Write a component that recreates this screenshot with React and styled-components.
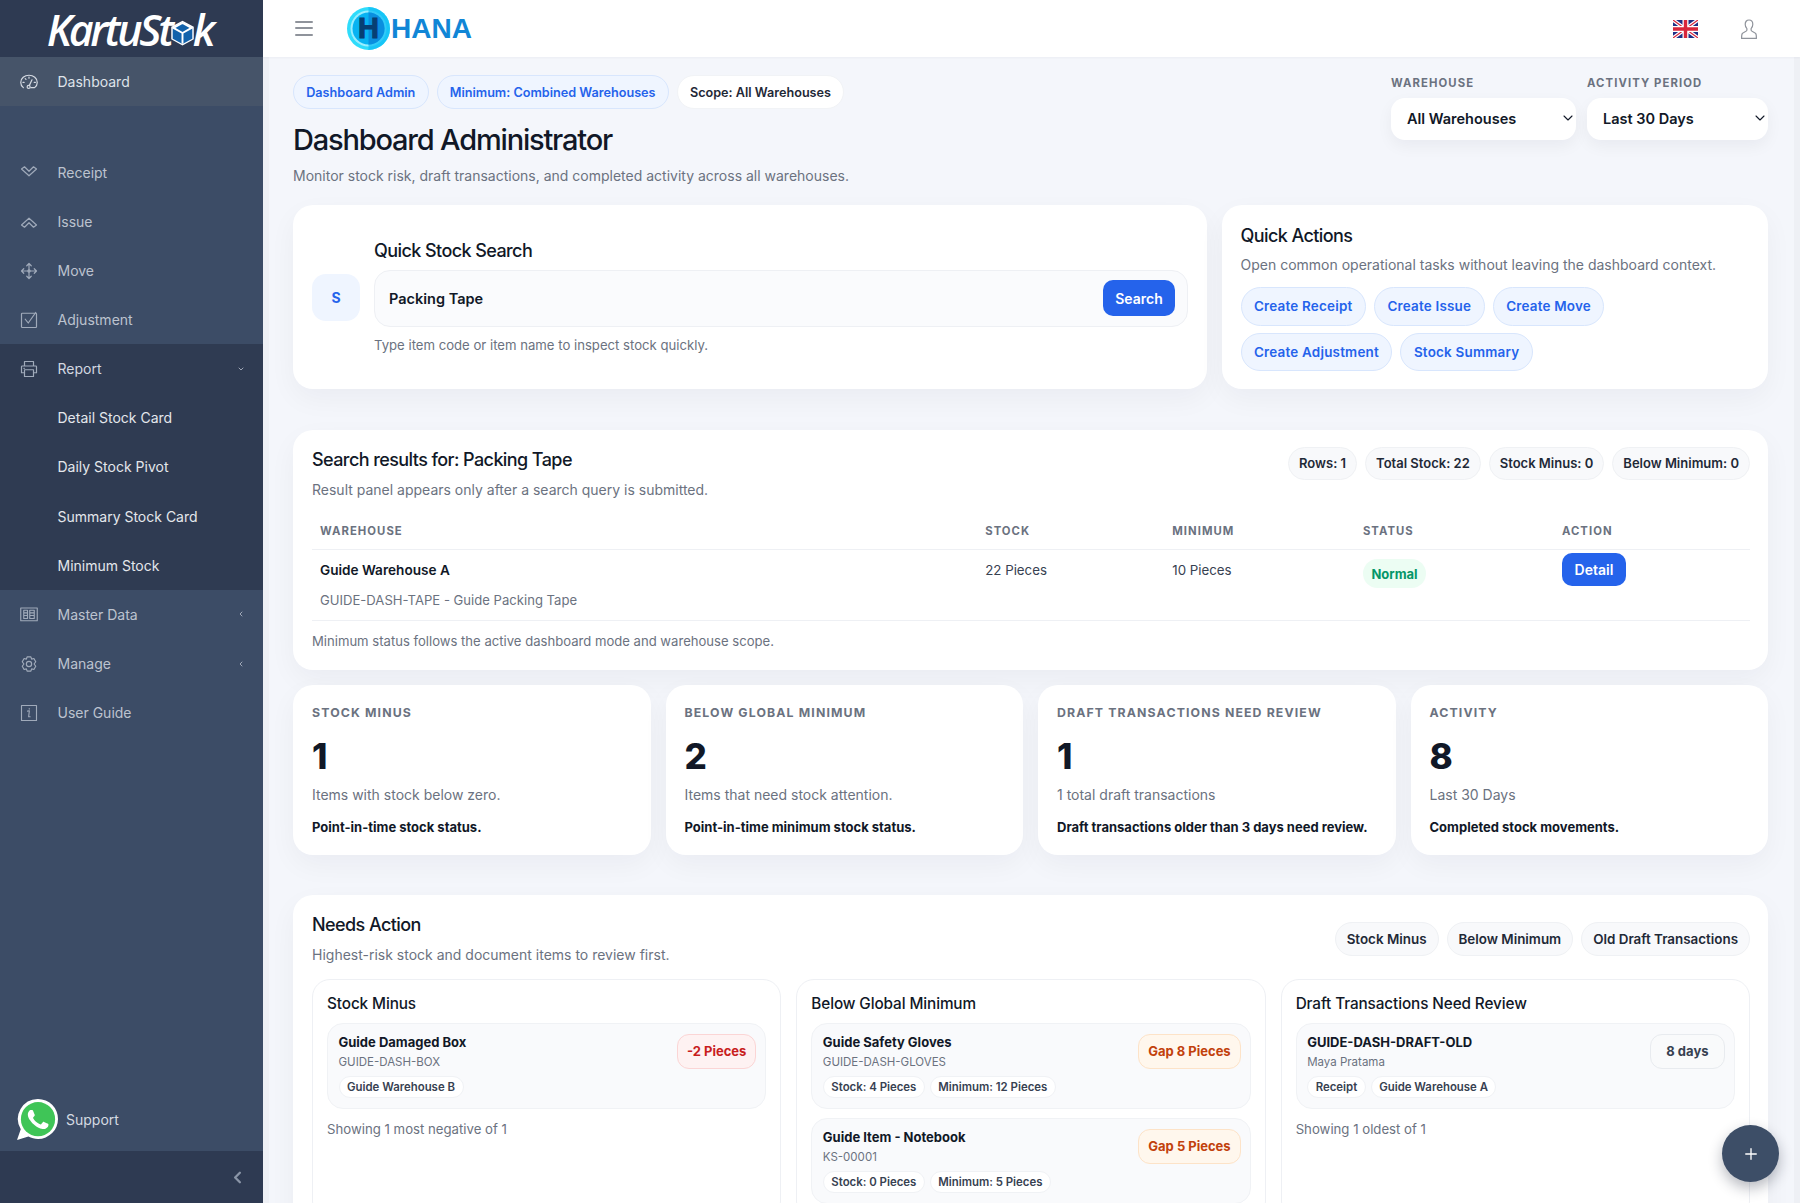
import React from "react";
import styled, { createGlobalStyle } from "styled-components";
import { ChevronDown, ChevronLeft, Plus } from "lucide-react";

const Global = createGlobalStyle`
  html, body { margin: 0; padding: 0; height: 100%; overflow: hidden; }
  body { font-family: Inter, "Noto Sans", sans-serif; background: #f4f6fb; color: #111827; -webkit-font-smoothing: antialiased; }
  * { box-sizing: border-box; }
`;

const Shell = styled.div`
  display: grid; grid-template-columns: 263px 1fr; height: 1203px; overflow: hidden;
`;
const Sidebar = styled.aside`
  background: #3c4c66; display: flex; flex-direction: column; height: 100%; color: #bcc3cf;
`;
const LogoBar = styled.div`
  height: 57px; background: #2e3a52; display: flex; align-items: center; justify-content: center; flex: none;
`;
const LogoText = styled.span`
  font-family: "Open Sans", sans-serif; font-style: italic; font-weight: 600; font-size: 43px; letter-spacing: -3.3px; color: #fff;
  display: inline-flex; align-items: center; line-height: 1; transform: translate(-2px, 1px);
  svg { margin: 7px -3px 0 -2px; }
`;
const NavRow = styled.div`
  height: 49.2px; display: flex; align-items: center; padding: 0 19px 0 20px; font-size: 14px; flex: none;
  background: ${p => (p.$active ? "#465469" : "transparent")};
  color: ${p => (p.$sub ? "#e4e7ec" : p.$active ? "#dfe3e9" : p.$open ? "#d3d8e0" : "#bcc3cf")};
  padding-left: ${p => (p.$sub ? "57.5px" : "20px")};
`;
const NavIcon = styled.span`
  width: 18px; height: 18px; margin-right: 19.5px; display: inline-flex; color: ${p => (p.$active ? "#d5dae2" : "#a0aaba")}; flex: none;
  svg { width: 18px; height: 18px; }
`;
const NavLabel = styled.span`flex: 1;`;
const NavSpacer = styled.div`height: 41.6px; flex: none;`;
const NavGroup = styled.div`background: #2f3b52; flex: none; margin-top: -0.6px;`;
const Caret = styled.span`
  display: inline-flex; color: #b4bcc9; width: 8px; justify-content: center; margin-right: -1px;
`;
const SidebarFill = styled.div`flex: 1;`;
const Support = styled.div`
  display: flex; align-items: center; gap: 8px; padding: 0 0 11.5px 17px; font-size: 14px; color: #d5dae2;
`;
const SidebarFoot = styled.div`
  height: 52px; background: #2e3a52; display: flex; align-items: center; justify-content: flex-end; padding: 0 16px 0 0; color: #8a95a7; flex: none;
`;

const Main = styled.main`
  position: relative; display: flex; flex-direction: column; height: 100%; overflow: hidden; min-width: 0;
  background: linear-gradient(90deg, #eef0f5 0, #eef0f5 6px, #f4f6fb 6px, #f4f6fb calc(100% - 6px), #eef0f5 calc(100% - 6px));
`;
const Topbar = styled.header`
  height: 57px; background: #fff; display: flex; align-items: center; flex: none; padding: 0 43px 0 32px; box-shadow: 0 1px 2px rgba(15,23,42,.04);
`;
const Burger = styled.div`
  width: 18px; height: 15px; display: flex; flex-direction: column; justify-content: space-between; margin-right: 34px; margin-top: -1px;
  i { display: block; height: 2px; background: #8f939b; border-radius: 1px; }
`;
const Brand = styled.div`
  display: flex; align-items: center; gap: 1px; color: #1186d6; font-family: "Liberation Sans", sans-serif; font-weight: 700; font-size: 28px; line-height: 1;
`;
const TopFill = styled.div`flex: 1;`;
const TopIcons = styled.div`display: flex; align-items: center; gap: 43px;`;

const Content = styled.div`
  padding: 18px 32px 0 30px; display: flex; flex-direction: column; min-height: 0;
`;
const PageHead = styled.div`display: flex; justify-content: space-between; align-items: flex-start;`;
const PageIntro = styled.div`display: flex; flex-direction: column;`;
const ChipRow = styled.div`display: flex; gap: 8px; flex-wrap: wrap; margin-top: ${p => p.$mt ?? 0}px;`;
const ActionRow = styled.div`display: flex; gap: 7px 8px; flex-wrap: wrap; margin-top: 12px;`;
const Chip = styled.span`
  display: inline-flex; align-items: center; height: ${p => p.$h ?? 34}px; padding: 0 ${p => p.$px ?? 12.2}px; border-radius: 999px; font-size: ${p => p.$fs ?? 12.65}px; font-weight: 600; white-space: nowrap;
  background: ${p => (p.$tone === "blue" ? "#eff5ff" : p.$tone === "white" ? "#fff" : "#f8f9fb")};
  color: ${p => (p.$tone === "blue" ? "#2563eb" : "#1f2937")};
  border: 1px solid ${p => (p.$tone === "blue" ? "#d8e6fd" : p.$tone === "white" ? "#f1f3f6" : "#eff1f4")};
`;
const PageTitle = styled.h1`
  margin: 13px 0 0; font-size: 29px; line-height: 36px; font-weight: 500; letter-spacing: -1.19px; color: #111827;
`;
const PageSub = styled.p`margin: 7px 0 0; font-size: 14px; line-height: 22px; color: #6b7280;`;
const Filters = styled.div`display: flex; gap: 11px; padding-top: 1px;`;
const Filter = styled.div`display: flex; flex-direction: column; width: ${p => p.$w}px;`;
const FilterLabel = styled.span`
  font-size: 11.3px; line-height: 14px; font-weight: 700; letter-spacing: 1.1px; color: #6b7280; text-transform: uppercase;
`;
const Select = styled.div`
  margin-top: 8px; height: 42px; background: #fff; border-radius: 14px; display: flex; align-items: center; justify-content: space-between; padding: 0 0 1.5px 16px; font-size: 14.5px; font-weight: 600; color: #111827;
  box-shadow: 0 6px 16px rgba(15,23,42,.05);
`;

const TopGrid = styled.div`
  display: grid; grid-template-columns: 914fr 546fr; gap: 15px; margin-top: 18px;
`;
const Card = styled.section`
  background: #fff; border-radius: 20px; box-shadow: 0 10px 28px rgba(15,23,42,.045); padding: ${p => p.$pad ?? "19px"};
  margin-top: ${p => p.$mt ?? 0}px;
`;
const SearchCard = styled(Card)`display: flex; align-items: center; gap: 14px;`;
const SearchBadge = styled.div`
  width: 48px; height: 47px; border-radius: 14px; background: #eff5ff; color: #2563eb; font-weight: 700; font-size: 14px; display: flex; align-items: center; justify-content: center; flex: none;
`;
const SearchBody = styled.div`flex: 1; min-width: 0;`;
const CardTitle = styled.h2`
  margin: 0; font-size: 18px; line-height: 22px; font-weight: 500; letter-spacing: -0.58px; color: #111827;
`;
const CardSub = styled.p`margin: ${p => p.$mt ?? 9}px 0 0; font-size: ${p => p.$fs ?? 14}px; line-height: 20px; color: #6b7280;`;
const SearchInputWrap = styled.div`
  margin-top: 8px; height: 57px; border: 1px solid #eef0f4; background: #fafbfd; border-radius: 16px; display: flex; align-items: center; padding: 0 12px 0 14px;
`;
const SearchInput = styled.input`
  flex: 1; border: 0; background: transparent; outline: 0; font: 600 14.5px Inter, sans-serif; color: #111827; padding: 0; min-width: 0;
`;
const PrimaryButton = styled.button`
  border: 0; background: #2563eb; color: #fff; font: 600 14px Inter, sans-serif; height: ${p => p.$h ?? 36}px; width: ${p => p.$w ?? 72}px; border-radius: 10px; display: inline-flex; align-items: center; justify-content: center; padding: 0;
`;
const ActionChip = styled.span`
  display: inline-flex; align-items: center; height: 38.5px; padding: 0 12.5px; border-radius: 999px; font-size: 13.45px; letter-spacing: 0.2px; font-weight: 600; background: #eff5ff; color: #2563eb; border: 1px solid #d8e6fd;
`;
const HeadRow = styled.div`display: flex; justify-content: space-between; align-items: flex-start;`;
const Table = styled.table`
  width: 100%; border-collapse: collapse; table-layout: fixed; margin-top: 13px;
`;
const Th = styled.th`
  width: ${p => p.$w}px; height: 37px; text-align: left; padding: 0 8px; font-size: 11.3px; font-weight: 700; letter-spacing: 1.05px; text-transform: uppercase; color: #6b7280; border-bottom: 1px solid #eef0f4; vertical-align: middle;
`;
const Td = styled.td`
  padding: ${p => p.$pt ?? 9.5}px 8px 0; vertical-align: top; height: 71px; font-size: 13.3px; line-height: 20px; color: #374151; border-bottom: 1px solid #eef0f4;
`;
const RowName = styled.div`font-weight: 600; font-size: 13.6px; color: #111827;`;
const RowCode = styled.div`margin-top: 10.5px; font-size: 13.1px; color: #6b7280;`;
const StatusChip = styled.span`
  display: inline-flex; align-items: center; height: 29px; padding: 0 8.5px; border-radius: 999px; background: #ecfdf3; color: #059669; font-size: 13px; font-weight: 700;
`;
const StatGrid = styled.div`display: grid; grid-template-columns: repeat(4, 1fr); gap: 15px; margin-top: 15px;`;
const StatCard = styled(Card)`height: 170px; padding: 20px 19px 0;`;
const StatLabel = styled.div`
  font-size: 12.3px; line-height: 16px; font-weight: 700; letter-spacing: 1.13px; color: #6b7280; text-transform: uppercase; white-space: nowrap;
`;
const StatValue = styled.div`
  margin-top: 13.5px; font-size: 35px; line-height: 44px; font-weight: 800; color: #111827;
`;
const StatSub = styled.div`margin-top: 7px; font-size: 14px; line-height: 20px; color: #6b7280;`;
const StatNote = styled.div`margin-top: 13px; font-size: 13px; line-height: 18px; font-weight: 700; color: #111827; white-space: nowrap;`;
const NeedsGrid = styled.div`display: grid; grid-template-columns: repeat(3, 1fr); gap: 15px; margin-top: 14.5px;`;
const Panel = styled.div`
  border: 1px solid #eef0f4; border-radius: 18px; padding: 14px; background: #fff;
`;
const PanelTitle = styled.h3`margin: 0; font-size: 15.3px; line-height: 20px; font-weight: 500; letter-spacing: -0.1px; color: #111827;`;
const Item = styled.div`
  margin-top: ${p => p.$mt ?? 9}px; min-height: 86px; background: #f9fafc; border: 1px solid #f0f2f5; border-radius: 16px; padding: 8.5px 9px 10px 10.5px; display: flex; justify-content: space-between; align-items: flex-start;
`;
const ItemBody = styled.div`min-width: 0;`;
const ItemName = styled.div`font-size: 13px; line-height: 18px; font-weight: 700; color: #111827;`;
const ItemCode = styled.div`margin-top: 3.5px; font-size: 11.5px; line-height: 16px; color: #6b7280;`;
const ItemChips = styled.div`display: flex; gap: 5px; margin-top: 6px;`;
const MiniChip = styled.span`
  display: inline-flex; align-items: center; height: 22px; padding: 0 7.5px; border-radius: 999px; background: #fff; border: 1px solid #f0f2f5; font-size: 11.4px; font-weight: 600; color: #374151; white-space: nowrap;
`;
const Badge = styled.span`
  display: inline-flex; align-items: center; height: 35px; margin-top: 1px; padding: 0 9px; border-radius: 12px; font-size: 13px; font-weight: 700; white-space: nowrap; flex: none;
  background: ${p => ({ red: "#fef2f2", orange: "#fff7ed", gray: "#f9fafb" }[p.$tone])};
  color: ${p => ({ red: "#c81e1e", orange: "#c2410c", gray: "#374151" }[p.$tone])};
  border: 1px solid ${p => ({ red: "#fbd5d5", orange: "#fde3c8", gray: "#e8ebef" }[p.$tone])};
  ${p => p.$tone === "gray" && "padding: 0 15.5px;"}
`;
const PanelFoot = styled.div`margin-top: 9.5px; font-size: 13.2px; line-height: 20px; color: #6b7280;`;
const Fab = styled.button`
  position: absolute; right: 21px; bottom: 21px; width: 57px; height: 57px; border-radius: 50%; border: 0; background: #3d4e67; color: #fff; display: flex; align-items: center; justify-content: center; box-shadow: 0 6px 14px rgba(15,23,42,.3);
`;

const S = { fill: "none", stroke: "currentColor", strokeWidth: 1.6, strokeLinecap: "round", strokeLinejoin: "round", viewBox: "0 0 24 24" };
const IconDash = () => (<svg {...S}><path d="M4.5 19.5C2 17.5 1 15 1 12.5 1 7 6 3 12 3s11 4 11 9.5c0 2.6-1 5-3.500 7h-5" /><circle cx="11.500" cy="18.500" r="2" /><path d="M12.500 16.500 16 9M4 12.500h1.500M7 7.500l1 1M12 5.500v1.500M19 12.500h1.500" /></svg>);
const IconIn = () => (<svg {...S}><path d="M2 8l10 9 10-9-4-3-6 6-6-6z" /></svg>);
const IconOut = () => (<svg {...S}><path d="M2 16l10-9 10 9-4 3-6-6-6 6z" /></svg>);
const IconMove = () => (<svg {...S}><path d="M12 2v20M2 12h20M9 5l3-3 3 3M9 19l3 3 3-3M5 9l-3 3 3 3M19 9l3 3-3 3" /><circle cx="12" cy="12" r="1.500" /></svg>);
const IconCheck = () => (<svg {...S}><rect x="2" y="3" width="20" height="19" rx="1" /><path d="M7 11l4 5 10-14" /></svg>);
const IconPrint = () => (<svg {...S}><path d="M6 8V2h12v6M6 17H2V9a1 1 0 0 1 1-1h18a1 1 0 0 1 1 1v8h-4" /><path d="M6 13h12v9H6zM5 11h1" /></svg>);
const IconTable = () => (<svg {...S} strokeWidth={1.5}><rect x="1" y="4" width="22" height="17" /><path d="M5 7h5v11H5zM13 7h6v11h-6zM13 10.500h6M13 14h6M5 10.500h5M5 14h5" /></svg>);
const IconGear = () => (<svg {...S}><circle cx="12" cy="12" r="3.500" /><path d="M9.500 2.500h5l1 3 3-.8 2.500 4.300-2.200 3 2.200 3-2.500 4.300-3-.8-1 3h-5l-1-3-3 .8L3 15l2.200-3L3 9l2.500-4.300 3 .8z" /></svg>);
const IconInfo = () => (<svg {...S} strokeWidth={1.5}><rect x="2" y="2" width="20" height="20" /><path d="M10 9.500 12.500 9l-1 8h2M12.300 6v.8" /></svg>);

const ChevD = () => <Caret><ChevronDown size={14} strokeWidth={2.5} /></Caret>;
const ChevL = () => <Caret><ChevronLeft size={14} strokeWidth={2.5} /></Caret>;

const Cube = () => (
  <svg width="27" height="28" viewBox="0 0 24 24">
    <path d="M12 1l10 5.500v11L12 23 2 17.500v-11z" fill="#fff" />
    <path d="M12 2.500l8.700 4.800v9.700L12 21.800 3.300 17V7.300z" fill="#1262ab" />
    <path d="M12 3l8 4.500-8 4.500-8-4.500zM12 12v9.500" fill="none" stroke="#fff" strokeWidth="1.700" />
  </svg>
);
const HanaMark = () => (
  <svg width="43" height="43" viewBox="0 0 43 43">
    <circle cx="21.500" cy="21.500" r="21.500" fill="#2fdcfb" />
    <circle cx="21.500" cy="21.500" r="18" fill="#9aeeff" />
    <path d="M21.500 0a21.500 21.500 0 0 1 0 43z" fill="#10bdf5" opacity=".75" />
    <circle cx="21.500" cy="21.500" r="16" fill="#08b3f2" />
    <path d="M21.500 5.500a16 16 0 0 1 0 32z" fill="#0a8fdf" />
    <text x="21.500" y="31" textAnchor="middle" fontFamily="Liberation Sans" fontWeight="700" fontSize="29" stroke="#073f73" strokeWidth="1" fill="#073f73">H</text>
  </svg>
);
const Flag = () => (
  <svg width="25" height="18" viewBox="0 0 25 18">
    <rect width="25" height="18" fill="#1f2f86" />
    <path d="M0 0l25 18M25 0L0 18" stroke="#fff" strokeWidth="3.600" />
    <path d="M0 0l25 18M25 0L0 18" stroke="#d8263c" strokeWidth="1.200" />
    <path d="M12.500 0v18M0 9h25" stroke="#fff" strokeWidth="6" />
    <path d="M12.500 0v18M0 9h25" stroke="#d8263c" strokeWidth="3.400" />
  </svg>
);
const UserIcon = () => (
  <svg width="16" height="20" viewBox="0 0 16 20" fill="none" stroke="#8f939b" strokeWidth="1.200" strokeLinejoin="round">
    <path d="M8 1c2.400 0 3.800 1.900 3.800 4.300 0 1.900-.8 3.500-1.700 4.400v1.500c0 1 3.200 2 4.600 3.300.6.600.7 2 .7 4.900H.6c0-2.900.1-4.300.7-4.900 1.400-1.300 4.600-2.300 4.600-3.300V9.700C5 8.800 4.200 7.200 4.200 5.300 4.200 2.900 5.600 1 8 1z" />
  </svg>
);
const WhatsApp = () => (
  <svg width="41" height="41" viewBox="0 0 24 24">
    <path d="M12.300 0a11.700 11.700 0 0 1 0 23.400c-2 0-3.900-.5-5.600-1.400L0 24l2.200-6.300A11.700 11.700 0 0 1 12.300 0z" fill="#fff" />
    <circle cx="12.300" cy="11.800" r="10" fill="#3fc557" />
    <path d="M17.800 14.400c-.3-.15-1.760-.87-2.030-.97-.27-.1-.47-.15-.67.15-.2.3-.77.97-.94 1.160-.17.2-.35.22-.64.08-.3-.15-1.260-.47-2.400-1.480-.88-.79-1.480-1.760-1.650-2.060-.17-.3-.02-.46.13-.6.13-.14.3-.35.45-.52.15-.18.2-.3.3-.5.1-.2.05-.37-.03-.52-.07-.15-.67-1.610-.92-2.210-.24-.58-.49-.5-.67-.51h-.57c-.2 0-.52.07-.79.37-.27.3-1.040 1.020-1.040 2.480s1.070 2.880 1.210 3.070c.15.2 2.100 3.200 5.080 4.490.71.31 1.260.49 1.700.63.710.22 1.360.19 1.870.12.570-.09 1.760-.72 2-1.410.25-.7.25-1.290.18-1.420-.08-.12-.28-.2-.58-.35z" fill="#fff" />
  </svg>
);

const navTop = [["Receipt", IconIn], ["Issue", IconOut], ["Move", IconMove], ["Adjustment", IconCheck]];
const subs = ["Detail Stock Card", "Daily Stock Pivot", "Summary Stock Card", "Minimum Stock"];
const stats = [
  ["Stock Minus", "1", "Items with stock below zero.", "Point-in-time stock status."],
  ["Below Global Minimum", "2", "Items that need stock attention.", "Point-in-time minimum stock status."],
  ["Draft Transactions Need Review", "1", "1 total draft transactions", "Draft transactions older than 3 days need review."],
  ["Activity", "8", "Last 30 Days", "Completed stock movements."],
];

const NavItem = ({ icon: I, label, children, active, open }) => (
  <NavRow $active={active} $open={open}>
    <NavIcon $active={active}><I /></NavIcon>
    <NavLabel>{label}</NavLabel>
    {children}
  </NavRow>
);

const NeedItem = ({ name, code, chips, badge, tone, mt }) => (
  <Item $mt={mt}>
    <ItemBody>
      <ItemName>{name}</ItemName>
      <ItemCode>{code}</ItemCode>
      <ItemChips>{chips.map(c => <MiniChip key={c}>{c}</MiniChip>)}</ItemChips>
    </ItemBody>
    <Badge $tone={tone}>{badge}</Badge>
  </Item>
);

export default function App() {
  return (
    <>
      <Global />
      <Shell>
        <Sidebar>
          <LogoBar><LogoText>KartuSt<Cube />k</LogoText></LogoBar>
          <NavItem icon={IconDash} label="Dashboard" active />
          <NavSpacer />
          {navTop.map(([l, I]) => <NavItem key={l} icon={I} label={l} />)}
          <NavGroup>
            <NavItem icon={IconPrint} label="Report" open><ChevD /></NavItem>
            {subs.map(s => <NavRow key={s} $sub>{s}</NavRow>)}
          </NavGroup>
          <NavItem icon={IconTable} label="Master Data"><ChevL /></NavItem>
          <NavItem icon={IconGear} label="Manage"><ChevL /></NavItem>
          <NavItem icon={IconInfo} label="User Guide" />
          <SidebarFill />
          <Support><WhatsApp />Support</Support>
          <SidebarFoot><ChevronLeft size={19} strokeWidth={3} /></SidebarFoot>
        </Sidebar>
        <Main>
          <Topbar>
            <Burger><i /><i /><i /></Burger>
            <Brand><HanaMark />HANA</Brand>
            <TopFill />
            <TopIcons><Flag /><UserIcon /></TopIcons>
          </Topbar>
          <Content>
            <PageHead>
              <PageIntro>
                <ChipRow>
                  <Chip $tone="blue">Dashboard Admin</Chip>
                  <Chip $tone="blue">Minimum: Combined Warehouses</Chip>
                  <Chip $tone="white">Scope: All Warehouses</Chip>
                </ChipRow>
                <PageTitle>Dashboard Administrator</PageTitle>
                <PageSub>Monitor stock risk, draft transactions, and completed activity across all warehouses.</PageSub>
              </PageIntro>
              <Filters>
                <Filter $w={185}>
                  <FilterLabel>Warehouse</FilterLabel>
                  <Select>All Warehouses<ChevronDown size={16} strokeWidth={1.6} /></Select>
                </Filter>
                <Filter $w={181}>
                  <FilterLabel>Activity Period</FilterLabel>
                  <Select>Last 30 Days<ChevronDown size={16} strokeWidth={1.6} /></Select>
                </Filter>
              </Filters>
            </PageHead>

            <TopGrid>
              <SearchCard>
                <SearchBadge>S</SearchBadge>
                <SearchBody>
                  <CardTitle>Quick Stock Search</CardTitle>
                  <SearchInputWrap>
                    <SearchInput defaultValue="Packing Tape" />
                    <PrimaryButton>Search</PrimaryButton>
                  </SearchInputWrap>
                  <CardSub $mt={8} $fs={13.15}>Type item code or item name to inspect stock quickly.</CardSub>
                </SearchBody>
              </SearchCard>
              <Card $pad="20px 19px 18px 18.5px">
                <CardTitle>Quick Actions</CardTitle>
                <CardSub $mt={8}>Open common operational tasks without leaving the dashboard context.</CardSub>
                <ActionRow>
                  <ActionChip>Create Receipt</ActionChip>
                  <ActionChip>Create Issue</ActionChip>
                  <ActionChip>Create Move</ActionChip>
                  <ActionChip>Create Adjustment</ActionChip>
                  <ActionChip>Stock Summary</ActionChip>
                </ActionRow>
              </Card>
            </TopGrid>

            <Card $mt={41} $pad="19px 18px 18.5px 19px">
              <HeadRow>
                <div>
                  <CardTitle>Search results for: Packing Tape</CardTitle>
                  <CardSub $mt={8.5}>Result panel appears only after a search query is submitted.</CardSub>
                </div>
                <ChipRow $mt={-2.5}>
                  <Chip $h={33} $px={10} $fs={13}>Rows: 1</Chip>
                  <Chip $h={33} $px={10} $fs={13}>Total Stock: 22</Chip>
                  <Chip $h={33} $px={10} $fs={13}>Stock Minus: 0</Chip>
                  <Chip $h={33} $px={10} $fs={13}>Below Minimum: 0</Chip>
                </ChipRow>
              </HeadRow>
              <Table>
                <thead>
                  <tr>
                    <Th $w={665}>Warehouse</Th>
                    <Th $w={187}>Stock</Th>
                    <Th $w={190.6}>Minimum</Th>
                    <Th $w={199}>Status</Th>
                    <Th $w={196}>Action</Th>
                  </tr>
                </thead>
                <tbody>
                  <tr>
                    <Td>
                      <RowName>Guide Warehouse A</RowName>
                      <RowCode>GUIDE-DASH-TAPE - Guide Packing Tape</RowCode>
                    </Td>
                    <Td>22 Pieces</Td>
                    <Td>10 Pieces</Td>
                    <Td $pt={9}><StatusChip>Normal</StatusChip></Td>
                    <Td $pt={2.5}><PrimaryButton $h={33} $w={64}>Detail</PrimaryButton></Td>
                  </tr>
                </tbody>
              </Table>
              <CardSub $mt={10} $fs={13.1}>Minimum status follows the active dashboard mode and warehouse scope.</CardSub>
            </Card>

            <StatGrid>
              {stats.map(([a, b, c, d]) => (
                <StatCard key={a}>
                  <StatLabel>{a}</StatLabel>
                  <StatValue>{b}</StatValue>
                  <StatSub>{c}</StatSub>
                  <StatNote>{d}</StatNote>
                </StatCard>
              ))}
            </StatGrid>

            <Card $mt={40} $pad="19px 18px 19px 19px">
              <HeadRow>
                <div>
                  <CardTitle>Needs Action</CardTitle>
                  <CardSub>Highest-risk stock and document items to review first.</CardSub>
                </div>
                <ChipRow $mt={8}>
                  <Chip $fs={13.4} $px={11}>Stock Minus</Chip>
                  <Chip $fs={13.4} $px={11}>Below Minimum</Chip>
                  <Chip $fs={13.4} $px={11}>Old Draft Transactions</Chip>
                </ChipRow>
              </HeadRow>
              <NeedsGrid>
                <Panel>
                  <PanelTitle>Stock Minus</PanelTitle>
                  <NeedItem name="Guide Damaged Box" code="GUIDE-DASH-BOX" chips={["Guide Warehouse B"]} badge="-2 Pieces" tone="red" />
                  <PanelFoot>Showing 1 most negative of 1</PanelFoot>
                </Panel>
                <Panel>
                  <PanelTitle>Below Global Minimum</PanelTitle>
                  <NeedItem name="Guide Safety Gloves" code="GUIDE-DASH-GLOVES" chips={["Stock: 4 Pieces", "Minimum: 12 Pieces"]} badge="Gap 8 Pieces" tone="orange" />
                  <NeedItem name="Guide Item - Notebook" code="KS-00001" chips={["Stock: 0 Pieces", "Minimum: 5 Pieces"]} badge="Gap 5 Pieces" tone="orange" />
                </Panel>
                <Panel>
                  <PanelTitle>Draft Transactions Need Review</PanelTitle>
                  <NeedItem name="GUIDE-DASH-DRAFT-OLD" code="Maya Pratama" chips={["Receipt", "Guide Warehouse A"]} badge="8 days" tone="gray" />
                  <PanelFoot>Showing 1 oldest of 1</PanelFoot>
                </Panel>
              </NeedsGrid>
            </Card>
          </Content>
          <Fab><Plus size={18} strokeWidth={1.8} /></Fab>
        </Main>
      </Shell>
    </>
  );
}
